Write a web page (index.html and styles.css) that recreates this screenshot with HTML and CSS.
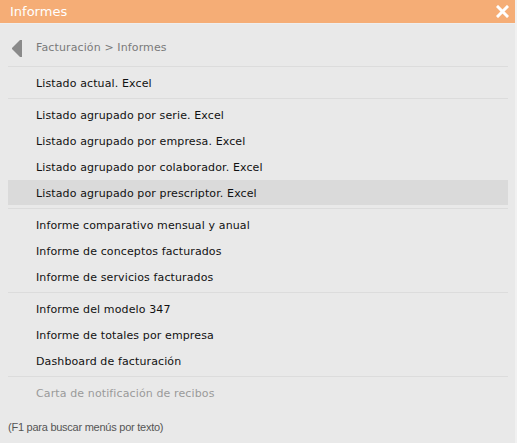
FILE: index.html
```html
<!DOCTYPE html>
<html lang="es">
<head>
  <meta charset="UTF-8">
  <meta name="viewport" content="width=device-width, initial-scale=1.0">
  <title>Informes</title>
  <link rel="stylesheet" href="styles.css">
</head>
<body>
  <div class="win">
    <header class="bar">
      <div class="title">Informes</div>
      <div class="close">
        <svg width="13" height="13" viewBox="0 0 13 13">
          <path d="M2 2 L11 11 M11 2 L2 11" stroke="#fff" stroke-width="3" stroke-linecap="square"/>
        </svg>
      </div>
    </header>
    <main class="menu">
      <div class="crumb">
        <svg class="back" width="10" height="17" viewBox="0 0 10 17">
          <path d="M10 0 V17 H8 L0 9 V8 L8 0 Z" fill="#8a8a8a"/>
        </svg>
        <span>Facturación &gt; Informes</span>
      </div>
      <ul class="group">
        <li>Listado actual. Excel</li>
      </ul>
      <ul class="group">
        <li>Listado agrupado por serie. Excel</li>
        <li>Listado agrupado por empresa. Excel</li>
        <li>Listado agrupado por colaborador. Excel</li>
        <li class="hover">Listado agrupado por prescriptor. Excel</li>
      </ul>
      <ul class="group">
        <li>Informe comparativo mensual y anual</li>
        <li>Informe de conceptos facturados</li>
        <li>Informe de servicios facturados</li>
      </ul>
      <ul class="group">
        <li>Informe del modelo 347</li>
        <li>Informe de totales por empresa</li>
        <li>Dashboard de facturación</li>
      </ul>
      <ul class="group last">
        <li class="off">Carta de notificación de recibos</li>
      </ul>
    </main>
    <footer class="hint">(F1 para buscar menús por texto)</footer>
  </div>
</body>
</html>
```

FILE: styles.css
```css
body,
header,
footer,
main,
div,
ul,
li,
span {
  margin: 0;
  border: 0;
  padding: 0;
}

li {
  list-style: none;
}

body {
  background: #f1f1f1;
  font-family: "DejaVu Sans", Verdana, sans-serif;
  font-size: 11px;
  letter-spacing: .12px;
  color: #111;
}

.win {
  width: 515px;
  height: 443px;
  background: #e9e9e9;
  display: flex;
  flex-direction: column;
}

.bar {
  height: 23px;
  display: flex;
  justify-content: space-between;
  align-items: center;
  padding: 0 6px 0 10px;
  background-color: #f5ad76;
  border-bottom: 1px solid #eeeeee;
}
.bar .title {
  color: #fff;
  font-size: 13px;
  letter-spacing: 0;
}
.bar .close {
  display: flex;
}

.menu {
  padding: 0 7px 0 8px;
}

.crumb {
  height: 38px;
  padding: 4px 0 0 4px;
  display: flex;
  align-items: center;
  border-bottom: 1px solid #dcdcdc;
  color: #7a7a7a;
}
.crumb .back {
  margin: 2px 14px 0 0;
}

/* each block of entries sits between two thin rules */
.group {
  padding: 3px 0 2px;
  border-bottom: 1px solid #dcdcdc;
}
.group.last {
  border-bottom: 0;
}
.group li {
  height: 23px;
  line-height: 23px;
  padding: 2px 0 0 28px;
  margin-bottom: 1px;
}
.group li.hover {
  background-color: #dadada;
}
.group li.off {
  color: #9a9a9a;
}

.hint {
  margin-top: 13px;
  padding-left: 8px;
  font-family: "Liberation Sans", Arial, sans-serif;
  font-size: 11px;
  letter-spacing: -.25px;
  color: #555;
}
```
